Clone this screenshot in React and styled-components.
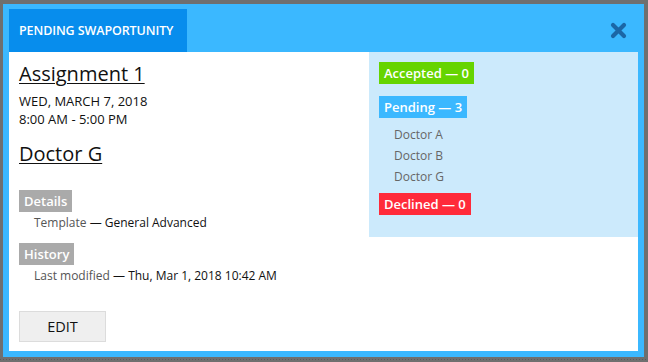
import React from "react";
import styled, { createGlobalStyle } from "styled-components";

const Global = createGlobalStyle`
  html, body { margin: 0; padding: 0; }
  body {
    background: #6f6f6f;
    font-family: "Open Sans", "Liberation Sans", sans-serif;
    width: 648px;
    height: 362px;
    overflow: hidden;
  }
`;

const Page = styled.div`
  width: 648px;
  height: 362px;
  padding: 4px 0 0 3px;
  box-sizing: border-box;
  background-color: #6f6f6f;
  background-image:
    repeating-linear-gradient(to right, #5a5a5a 0 1px, transparent 1px 3px);
  background-size: 100% 1px;
  background-position: 0 359px;
  background-repeat: no-repeat;
`;

const Modal = styled.div`
  width: 641px;
  height: 353px;
  box-sizing: border-box;
  background: #3bb8ff;
  padding: 5px 6px 6px 6px;
  display: flex;
  flex-direction: column;
`;

const Header = styled.div`
  height: 43px;
  display: flex;
  align-items: stretch;
  justify-content: space-between;
  flex-shrink: 0;
`;

const Tab = styled.div`
  background: #078ded;
  color: #fff;
  font-size: 12.5px;
  font-weight: 600;
  display: flex;
  align-items: center;
  padding: 0 10px 0 10px;
  width: 178px;
  box-sizing: border-box;
  white-space: nowrap;
  letter-spacing: -0.1px;
`;

const Close = styled.button`
  border: 0;
  background: none;
  padding: 0;
  margin: 13px 11px 0 0;
  width: 17px;
  height: 17px;
  cursor: pointer;
  display: flex;
`;

const Body = styled.div`
  flex: 1;
  background: #fff;
  display: grid;
  grid-template-columns: 360px 269px;
  align-items: start;
`;

const Left = styled.div`
  padding: 8px 0 0 10px;
  display: flex;
  flex-direction: column;
  align-items: flex-start;
  color: #111;
`;

const Title = styled.a`
  font-size: 20px;
  line-height: 27px;
  color: #111;
  text-decoration: underline;
  text-underline-offset: 2px;
  text-decoration-thickness: 1px;
  margin-top: ${(p) => p.$mt || 0}px;
`;

const Line = styled.div`
  font-size: ${(p) => p.$size || 12}px;
  line-height: 18px;
  color: ${(p) => p.$color || "#111"};
  margin-top: ${(p) => p.$mt || 0}px;
  padding-left: ${(p) => p.$indent || 0}px;
`;

const Muted = styled.span`
  color: #555;
`;

const Badge = styled.div`
  display: inline-flex;
  align-items: center;
  height: 22px;
  padding: 0 5px;
  font-size: 13px;
  font-weight: 600;
  color: #fff;
  background: ${(p) => p.$bg};
  margin-top: ${(p) => p.$mt || 0}px;
  white-space: nowrap;
`;

const EditButton = styled.button`
  margin-top: 26px;
  width: 87px;
  height: 31px;
  background: #efefef;
  border: 1px solid #dcdcdc;
  font-family: "Open Sans", "Liberation Sans", sans-serif;
  font-size: 14.5px;
  color: #111;
  padding: 0;
  cursor: pointer;
`;

const Right = styled.div`
  background: #cceafc;
  padding: 10px 10px 22px 10px;
  display: flex;
  flex-direction: column;
  align-items: flex-start;
`;

const NameList = styled.ul`
  list-style: none;
  margin: 6px 0 0 0;
  padding: 0 0 0 15px;
`;

const Name = styled.li`
  font-size: 12px;
  line-height: 21px;
  color: #666;
`;

export default function App() {
  return (
    <>
      <Global />
      <Page>
        <Modal>
          <Header>
            <Tab>PENDING SWAPORTUNITY</Tab>
            <Close aria-label="Close">
              <svg width="17" height="17" viewBox="0 0 17 17">
                <path
                  d="M3 3 L14 14 M14 3 L3 14"
                  stroke="#1b66a6"
                  strokeWidth="4.2"
                  strokeLinecap="round"
                />
              </svg>
            </Close>
          </Header>
          <Body>
            <Left>
              <Title>Assignment 1</Title>
              <Line $size={13} $mt={5}>WED, MARCH 7, 2018</Line>
              <Line $size={13}>8:00 AM - 5:00 PM</Line>
              <Title $mt={12}>Doctor G</Title>
              <Badge $bg="#aaaaaa" $mt={23}>Details</Badge>
              <Line $mt={2} $indent={15}>
                <Muted>Template</Muted> — General Advanced
              </Line>
              <Badge $bg="#aaaaaa" $mt={11}>History</Badge>
              <Line $mt={2} $indent={15}>
                <Muted>Last modified</Muted> — Thu, Mar 1, 2018 10:42 AM
              </Line>
              <EditButton>EDIT</EditButton>
            </Left>
            <Right>
              <Badge $bg="#66d400">Accepted — 0</Badge>
              <Badge $bg="#3bb8ff" $mt={12}>Pending — 3</Badge>
              <NameList>
                <Name>Doctor A</Name>
                <Name>Doctor B</Name>
                <Name>Doctor G</Name>
              </NameList>
              <Badge $bg="#ff2a3a" $mt={6}>Declined — 0</Badge>
            </Right>
          </Body>
        </Modal>
      </Page>
    </>
  );
}
